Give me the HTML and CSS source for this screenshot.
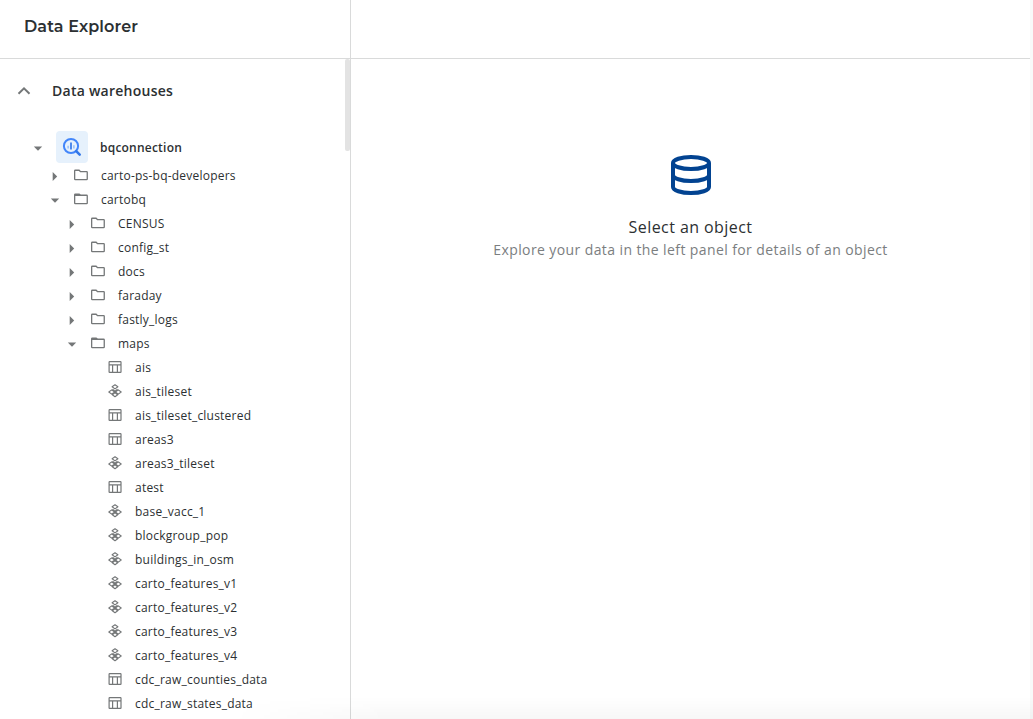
FILE: index.html
```html
<!DOCTYPE html>
<html lang="en">
<head>
<meta charset="utf-8">
<title>Data Explorer</title>
<link rel="stylesheet" href="styles.css">
</head>
<body>
<svg class="defs" aria-hidden="true">
  <symbol id="right" viewBox="0 0 16 16"><path d="M5.700 5l4.500 4.500L5.700 14z"/></symbol>
  <symbol id="down" viewBox="0 0 16 16"><path d="M3.800 7.500h8.400L8 11.800z"/></symbol>
  <symbol id="folder" viewBox="0 0 16 16"><path fill-rule="evenodd" d="M2.300 2.500H6.400L7.800 3.900H13.600Q14.900 3.900 14.900 5.200V11.900Q14.900 13.200 13.600 13.200H2.300Q1 13.200 1 11.900V3.800Q1 2.500 2.300 2.500zM2.300 3.900V11.900H13.600V5.200H7.200L5.900 3.900z"/></symbol>
  <symbol id="folder-open" viewBox="0 0 16 16"><path fill-rule="evenodd" d="M2.300 2.500H6.400L7.800 3.500H13.600Q14.900 3.500 14.900 4.800V11.900Q14.900 13.200 13.600 13.200H2.300Q1 13.200 1 11.900V3.800Q1 2.500 2.300 2.500zM2.300 5V11.900H13.600V5z"/></symbol>
  <symbol id="table" viewBox="0 0 16 16"><path fill-rule="evenodd" d="M2.700 2H13.400Q14.600 2 14.600 3.200V12.900Q14.600 14 13.400 14H2.700Q1.500 14 1.500 12.900V3.200Q1.500 2 2.700 2zM2.700 3.200V5.200H13.400V3.200zM2.700 6.500V12.800H5V6.500zM6.200 6.500V12.800H9.800V6.500zM11 6.500V12.800H13.400V6.500z"/></symbol>
  <symbol id="tiles" viewBox="0 0 16 16"><path fill="none" stroke="currentColor" stroke-width="1.100" stroke-linejoin="round" d="M8 1.700L10.900 3.800 8 5.900 5.100 3.800zM4.700 6.900L7.600 9 4.700 11.100 1.800 9zM11.300 6.900L14.200 9 11.300 11.100 8.400 9zM5.500 6.300L8 8.100 10.500 6.300M5.300 11.800L8 13.800 10.700 11.800L8 9.900z"/></symbol>
</svg>
<div class="app">
  <aside class="sidebar">
    <header class="topbar"><h1>Data Explorer</h1></header>
    <div class="panel">
      <div class="content">
        <div class="section">
          <svg class="chevron" viewBox="0 0 16 16"><path d="M2.500 10.800L8 5.300l5.500 5.500"/></svg>
          <h2>Data warehouses</h2>
        </div>
        <div class="connection">
          <svg class="icon"><use href="#down"/></svg>
          <span class="logo"><svg viewBox="0 0 20 20"><circle cx="9" cy="9" r="7.100" fill="none" stroke="#4386fa" stroke-width="2"/><path d="M14.200 14.200l3.500 3.500" stroke="#3478e9" stroke-width="2.600" stroke-linecap="round"/><path d="M9 5.600v7" stroke="#3478e9" stroke-width="1.700"/><path d="M6.100 8.700v2.800M11.900 8.200v3.300" stroke="#8bb8fa" stroke-width="1.300"/></svg></span>
          <strong>bqconnection</strong>
        </div>
        <ul class="tree">
          <li class="row"><svg class="icon"><use href="#right"/></svg><svg class="icon"><use href="#folder"/></svg><span>carto-ps-bq-developers</span></li>
          <li class="row"><svg class="icon"><use href="#down"/></svg><svg class="icon"><use href="#folder-open"/></svg><span>cartobq</span></li>
          <li>
            <ul class="branch">
              <li class="row"><svg class="icon"><use href="#right"/></svg><svg class="icon"><use href="#folder"/></svg><span>CENSUS</span></li>
              <li class="row"><svg class="icon"><use href="#right"/></svg><svg class="icon"><use href="#folder"/></svg><span>config_st</span></li>
              <li class="row"><svg class="icon"><use href="#right"/></svg><svg class="icon"><use href="#folder"/></svg><span>docs</span></li>
              <li class="row"><svg class="icon"><use href="#right"/></svg><svg class="icon"><use href="#folder"/></svg><span>faraday</span></li>
              <li class="row"><svg class="icon"><use href="#right"/></svg><svg class="icon"><use href="#folder"/></svg><span>fastly_logs</span></li>
              <li class="row"><svg class="icon"><use href="#down"/></svg><svg class="icon"><use href="#folder-open"/></svg><span>maps</span></li>
              <li>
                <ul class="leaves">
                  <li class="row"><svg class="icon"><use href="#table"/></svg><span>ais</span></li>
                  <li class="row"><svg class="icon"><use href="#tiles"/></svg><span>ais_tileset</span></li>
                  <li class="row"><svg class="icon"><use href="#table"/></svg><span>ais_tileset_clustered</span></li>
                  <li class="row"><svg class="icon"><use href="#table"/></svg><span>areas3</span></li>
                  <li class="row"><svg class="icon"><use href="#tiles"/></svg><span>areas3_tileset</span></li>
                  <li class="row"><svg class="icon"><use href="#table"/></svg><span>atest</span></li>
                  <li class="row"><svg class="icon"><use href="#tiles"/></svg><span>base_vacc_1</span></li>
                  <li class="row"><svg class="icon"><use href="#tiles"/></svg><span>blockgroup_pop</span></li>
                  <li class="row"><svg class="icon"><use href="#tiles"/></svg><span>buildings_in_osm</span></li>
                  <li class="row"><svg class="icon"><use href="#tiles"/></svg><span>carto_features_v1</span></li>
                  <li class="row"><svg class="icon"><use href="#tiles"/></svg><span>carto_features_v2</span></li>
                  <li class="row"><svg class="icon"><use href="#tiles"/></svg><span>carto_features_v3</span></li>
                  <li class="row"><svg class="icon"><use href="#tiles"/></svg><span>carto_features_v4</span></li>
                  <li class="row"><svg class="icon"><use href="#table"/></svg><span>cdc_raw_counties_data</span></li>
                  <li class="row"><svg class="icon"><use href="#table"/></svg><span>cdc_raw_states_data</span></li>
                </ul>
              </li>
            </ul>
          </li>
        </ul>
      </div>
      <div class="scrollbar"></div>
    </div>
  </aside>
  <main class="main">
    <div class="topbar"></div>
    <section class="empty">
      <svg class="database" viewBox="0 0 48 48"><ellipse cx="24" cy="12" rx="18" ry="6"/><path d="M6 12v24c0 3.300 8 6 18 6s18-2.700 18-6V12M6 24c0 3.300 8 6 18 6s18-2.700 18-6"/></svg>
      <h3>Select an object</h3>
      <p>Explore your data in the left panel for details of an object</p>
    </section>
  </main>
  <div class="gutter"></div>
</div>
<div class="fade"></div>
</body>
</html>
```

FILE: styles.css
```css
* { box-sizing: border-box; }
body { margin: 0; background: #fff; color: #2c3032; font-family: "Open Sans", "Noto Sans", sans-serif; overflow: hidden; }
h1, h2, h3, p, ul { margin: 0; padding: 0; }
ul { list-style: none; }
.defs { display: none; }
.app { display: flex; height: 719px; }
.sidebar { flex: none; width: 351px; border-right: 1px solid #d9dada; display: flex; flex-direction: column; }
.topbar { flex: none; height: 59px; border-bottom: 1px solid #d9dada; padding: 15px 24px 0; }
h1 { font: 600 16px/24px Montserrat, Inter, sans-serif; letter-spacing: .13px; }
.panel { display: flex; flex: 1; min-height: 0; }
.content { flex: 1; overflow: hidden; }
.scrollbar { width: 5px; height: 92px; border-radius: 2px; background: #e3e3e3; }
.section { display: flex; align-items: center; gap: 20px; height: 64px; padding-left: 16px; }
.chevron { width: 16px; height: 16px; fill: none; stroke: #747778; stroke-width: 2; }
.connection { display: flex; align-items: center; height: 32px; margin-top: 8px; padding-left: 30px; }
h2 { font-size: 14px; line-height: 20px; font-weight: 600; letter-spacing: .25px; }
.connection strong { font-size: 12px; font-weight: 600; letter-spacing: .22px; margin-left: 12px; }
.logo { display: flex; align-items: center; justify-content: center; width: 32px; height: 32px; margin-left: 10px; border-radius: 4px; background: #e6f1fc; }
.logo svg { width: 20px; height: 20px; }
.icon { width: 16px; height: 16px; flex: none; fill: #747778; color: #747778; }
.tree { padding-left: 47px; }
.row { display: flex; align-items: center; height: 24px; font-size: 12px; line-height: 20px; letter-spacing: .22px; white-space: nowrap; }
.row .icon + .icon { margin-left: 10px; }
.row span { margin-left: 12px; padding-top: 2px; }
.branch { padding-left: 17px; }
.leaves { padding-left: 43px; }
.main { flex: 1; }
.gutter { width: 3px; background: #f8f9f9; }
.empty { display: flex; flex-direction: column; align-items: center; padding-top: 92px; }
.database { width: 48px; height: 48px; fill: none; stroke: #024391; stroke-width: 4; }
h3 { margin-top: 16px; font-size: 16px; line-height: 24px; font-weight: 400; letter-spacing: .43px; }
p { color: #7b7e7f; font-size: 14px; line-height: 20px; margin-top: 1px; letter-spacing: .4px; }
.fade { position: absolute; left: 230px; right: 0; bottom: 0; height: 22px; background: linear-gradient(to bottom, transparent, rgba(0,0,0,.03)); mask-image: linear-gradient(to right, transparent, #000 160px); pointer-events: none; }
```
